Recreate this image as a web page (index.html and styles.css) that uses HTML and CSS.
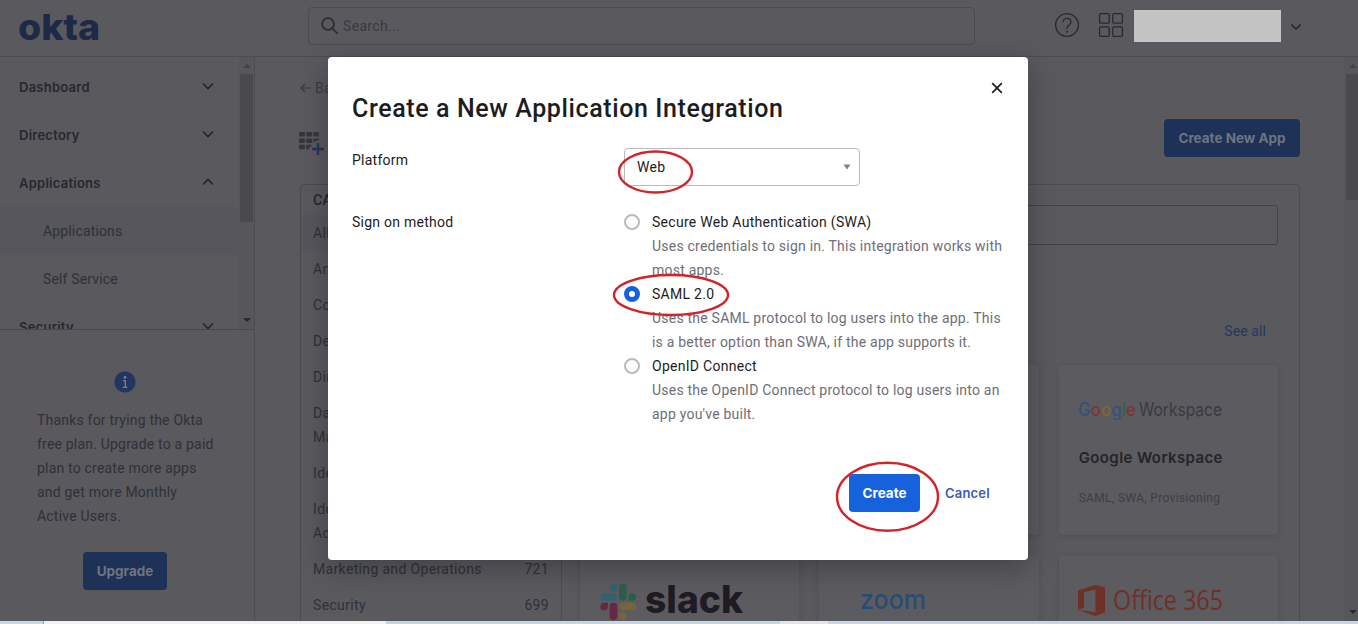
FILE: index.html
```html
<!DOCTYPE html>
<html lang="en">
<head>
<meta charset="utf-8">
<title>Create a New Application Integration</title>
<link rel="stylesheet" href="styles.css">
</head>
<body>
<div class="window">
  <div class="app">
    <header class="topbar">
      <div class="brand">
        <svg width="84" height="46" viewBox="0 0 84 46"><text class="okta" x="0" y="33" textLength="82" lengthAdjust="spacingAndGlyphs">okta</text></svg>
      </div>
      <div class="search">
        <svg width="20" height="20" viewBox="0 0 20 20" class="line-icon"><circle cx="8" cy="8" r="5.9"/><path d="M12.3 12.3 18 18"/></svg>
        <span>Search...</span>
      </div>
      <div class="tools">
        <svg width="26" height="26" viewBox="0 0 26 26" class="thin-icon"><circle cx="13" cy="13" r="11.4"/><path d="M9 10.2c0-2.3 1.7-3.8 4-3.800s4 1.500 4 3.600c0 2.900-4 3.100-4 6.200v.8"/><circle class="dot" cx="13" cy="19.800" r="1"/></svg>
        <svg width="26" height="26" viewBox="0 0 26 26" class="thin-icon"><rect x="1.600" y="1.600" width="9.600" height="9.600" rx="1.200"/><rect x="14.800" y="1.600" width="9.600" height="9.600" rx="1.200"/><rect x="1.600" y="14.800" width="9.600" height="9.600" rx="1.200"/><rect x="14.800" y="14.800" width="9.600" height="9.600" rx="1.200"/></svg>
        <div class="account"></div>
        <svg width="12" height="8" viewBox="0 0 12 8" class="chevron"><path d="M1.300 1.500 6 6l4.700-4.500"/></svg>
      </div>
    </header>
    <div class="body">
      <aside class="sidebar">
        <div class="nav-wrap">
          <nav class="nav">
            <div class="nav-item"><span>Dashboard</span><svg width="12" height="8" viewBox="0 0 12 8" class="chevron"><path d="M1 1.500 6 6.500l5-5"/></svg></div>
            <div class="nav-item"><span>Directory</span><svg width="12" height="8" viewBox="0 0 12 8" class="chevron"><path d="M1 1.500 6 6.500l5-5"/></svg></div>
            <div class="nav-item"><span>Applications</span><svg width="12" height="8" viewBox="0 0 12 8" class="chevron"><path d="M1 6.500 6 1.500l5 5"/></svg></div>
            <div class="nav-sub active">Applications</div>
            <div class="nav-sub">Self Service</div>
            <div class="nav-item"><span>Security</span><svg width="12" height="8" viewBox="0 0 12 8" class="chevron"><path d="M1 1.500 6 6.500l5-5"/></svg></div>
          </nav>
          <div class="scroll">
            <svg class="arrow up" width="8" height="4" viewBox="0 0 8 4"><path d="M0 4 4 0l4 4z"/></svg>
            <div class="thumb"></div>
            <svg class="arrow" width="8" height="4" viewBox="0 0 8 4"><path d="M0 0h8L4 4z"/></svg>
          </div>
        </div>
        <div class="promo">
          <svg width="22" height="22" viewBox="0 0 22 22"><circle cx="11" cy="11" r="10.600" fill="#22365f"/><circle cx="11" cy="6.400" r="1.300" fill="#7d8290"/><path d="M9 9.600h2.300v6.600M8.800 16.400h4.500" stroke="#7d8290" stroke-width="1.300" fill="none"/></svg>
          <p>Thanks for trying the Okta<br>free plan. Upgrade to a paid<br>plan to create more apps<br>and get more Monthly<br>Active Users.</p>
          <div class="btn-dim upgrade">Upgrade</div>
        </div>
      </aside>
      <main class="main">
        <div class="back"><svg width="12" height="10" viewBox="0 0 12 10"><path d="M11.500 5H1M5 1 1 5l4 4"/></svg><span>Back</span></div>
        <div class="page-head">
          <svg width="26" height="26" viewBox="0 0 26 26">
            <g fill="#36363c"><rect x="0" y="1" width="6" height="4.500" rx="1"/><rect x="7.200" y="1" width="6" height="4.500" rx="1"/><rect x="14.400" y="1" width="5.600" height="4.500" rx="1"/><rect x="0" y="7.500" width="6" height="4.500" rx="1"/><rect x="7.200" y="7.500" width="6" height="4.500" rx="1"/><path d="M14.400 8.500q0-1 1-1H20V9.500h-3.600V11h-2z"/><rect x="0" y="13.800" width="6" height="4.500" rx="1"/><path d="M7.200 13.800H12.500v2h-2v2.500H7.200z"/></g>
            <path d="M19 12v12M13 18h12" stroke="#22365f" stroke-width="2.400"/>
          </svg>
          <div class="btn-dim create-app">Create New App</div>
        </div>
        <div class="panel">
          <div class="cats">
            <div class="cat-head">CATEGORY</div>
            <div class="cat on"><span>All Integrations</span></div>
            <div class="cat"><span>Analytics</span></div>
            <div class="cat"><span>Collaboration</span></div>
            <div class="cat"><span>Developers</span></div>
            <div class="cat"><span>Directories</span></div>
            <div class="cat"><span>Data<br>Management</span></div>
            <div class="cat"><span>Identity</span></div>
            <div class="cat"><span>Identity<br>Administration</span></div>
            <div class="cat"><span>Marketing and Operations</span><span>721</span></div>
            <div class="cat"><span>Security</span><span>699</span></div>
          </div>
          <div class="results">
            <div class="filter"></div>
            <div class="see-all">See all</div>
            <div class="cards">
              <div class="card"></div>
              <div class="card"></div>
              <div class="card">
                <svg class="gw" width="150" height="28" viewBox="0 0 150 28"><text class="g-logo" x="-1" y="21" textLength="58" lengthAdjust="spacingAndGlyphs"><tspan fill="#34527f">G</tspan><tspan fill="#7b3738">o</tspan><tspan fill="#7c6630">o</tspan><tspan fill="#34527f">g</tspan><tspan fill="#32663f">l</tspan><tspan fill="#7b3738">e</tspan></text><text class="g-word" x="60" y="21" textLength="83" lengthAdjust="spacingAndGlyphs">Workspace</text></svg>
                <div class="card-title">Google Workspace</div>
                <div class="card-meta">SAML, SWA, Provisioning</div>
              </div>
              <div class="card short">
                <svg class="slack" width="150" height="38" viewBox="0 0 150 38">
                  <g stroke-width="7.600" stroke-linecap="round" fill="none">
                    <path d="M4.300 14H13.500" stroke="#35616f"/><path d="M22.800 4.300v9.700" stroke="#2c5d4b"/><path d="M22.800 23.500h9.700" stroke="#78643b"/><path d="M13.500 23.500v9.700" stroke="#652742"/>
                  </g>
                  <path d="M17.300 8H13.500A3.800 3.800 0 1 1 17.300 4.200z" fill="#35616f"/><path d="M28.500 17.800V14a3.800 3.800 0 1 1 3.800 3.800z" fill="#2c5d4b"/><path d="M19 29.400h3.800A3.800 3.800 0 1 1 19 33.200z" fill="#78643b"/><path d="M7.900 19.700v3.800a3.800 3.800 0 1 1-3.800-3.800z" fill="#652742"/>
                  <text class="slack-text" x="45" y="30" textLength="98" lengthAdjust="spacingAndGlyphs">slack</text>
                </svg>
              </div>
              <div class="card short">
                <svg class="zoom" width="80" height="30" viewBox="0 0 80 30"><text class="zoom-text" x="0" y="22" textLength="66" lengthAdjust="spacingAndGlyphs">zoom</text></svg>
              </div>
              <div class="card short">
                <svg class="office" width="160" height="36" viewBox="0 0 160 36"><path d="M0 6.500 17.500 1 27 3.500v25L17.500 32 0 26l17.500 2V5.500L6 8.200v15.600L0 26z" fill="#6f3027"/><text class="office-text" x="35" y="26" textLength="110" lengthAdjust="spacingAndGlyphs">Office 365</text></svg>
              </div>
            </div>
          </div>
        </div>
      </main>
      <div class="scroll page-scroll">
        <svg class="arrow up" width="8" height="4" viewBox="0 0 8 4"><path d="M0 4 4 0l4 4z"/></svg>
        <div class="thumb"></div>
        <svg class="arrow" width="8" height="4" viewBox="0 0 8 4"><path d="M0 0h8L4 4z"/></svg>
      </div>
    </div>
  </div>
  <div class="taskbar"><i class="a"></i><i class="b"></i><i class="c"></i><i class="d"></i><i class="e"></i></div>

  <section class="modal">
    <div class="modal-head">
      <h1>Create a New Application Integration</h1>
      <svg class="close" width="12" height="12" viewBox="0 0 12 12"><path d="M1.200 1.200l9.600 9.600M10.800 1.200 1.200 10.800"/></svg>
    </div>
    <div class="row platform">
      <div class="label">Platform</div>
      <div class="select"><span>Web</span><svg width="8" height="6" viewBox="0 0 8 6"><path d="M.5.5h7L4 5.500z" fill="#818188"/></svg></div>
    </div>
    <div class="row">
      <div class="label">Sign on method</div>
      <div class="options">
        <div class="option"><span class="radio"></span><div><div class="name">Secure Web Authentication (SWA)</div><div class="desc">Uses credentials to sign in. This integration works with<br>most apps.</div></div></div>
        <div class="option"><span class="radio checked"></span><div><div class="name">SAML 2.0</div><div class="desc">Uses the SAML protocol to log users into the app. This<br>is a better option than SWA, if the app supports it.</div></div></div>
        <div class="option"><span class="radio"></span><div><div class="name">OpenID Connect</div><div class="desc">Uses the OpenID Connect protocol to log users into an<br>app you've built.</div></div></div>
      </div>
    </div>
    <div class="actions"><div class="create">Create</div><div class="cancel">Cancel</div></div>
  </section>

  <svg class="marks" width="1358" height="624" viewBox="0 0 1358 624">
    <ellipse cx="655.500" cy="172" rx="36.500" ry="20.500"/>
    <ellipse cx="671" cy="295" rx="57" ry="20"/>
    <ellipse cx="887.500" cy="496.800" rx="50.500" ry="34"/>
  </svg>
</div>
</body>
</html>
```
FILE: styles.css
```css
* { box-sizing: border-box; }
body { margin: 0; background: #5a595e; font: 14px/24px Roboto, "Liberation Sans", sans-serif; letter-spacing: .34px; color: #303137; }
svg { display: block; flex: none; }
.window { position: relative; width: 1358px; height: 624px; overflow: hidden; display: flex; flex-direction: column; }
.app { flex: 1; min-height: 0; display: flex; flex-direction: column; overflow: hidden; }
.topbar { flex: none; height: 57px; border-bottom: 1px solid #4c4c51; display: flex; align-items: flex-start; }
.brand { width: 308px; padding: 7px 0 0 18px; }
.okta { font: 800 36px Inter, sans-serif; fill: #1d2946; letter-spacing: 0; }
.search { width: 667px; height: 38px; margin-top: 7px; border: 1px solid #4b4b50; border-radius: 4px; display: flex; align-items: center; gap: 3px; padding-left: 11px; color: #39393f; }
.line-icon { fill: none; stroke: #2b2b30; stroke-width: 1.7; }
.thin-icon { fill: none; stroke: #29292f; stroke-width: 1.3; }
.thin-icon .dot { fill: #29292f; stroke: none; }
.tools { display: flex; align-items: center; margin: 10px 0 0 79px; height: 32px; }
.thin-icon + .thin-icon { margin-left: 18px; }
.tools .thin-icon { margin-bottom: 2px; }
.account { width: 147px; height: 32px; background: #c4c4c4; margin-left: 10px; }
.tools .chevron { margin-left: 9px; margin-top: 2px; }
.chevron { fill: none; stroke: #232329; stroke-width: 1.6; }
.body { flex: 1; min-height: 0; display: flex; }
.sidebar { width: 255px; border-right: 1px solid #4d4d52; display: flex; flex-direction: column; }
.nav-wrap { height: 273px; flex: none; display: flex; border-bottom: 1px solid #47474c; overflow: hidden; }
.nav { width: 239px; padding-top: 6px; }
.nav-item { height: 48px; padding: 0 25px 0 19px; display: flex; align-items: center; justify-content: space-between; font: 600 13px/24px Inter, sans-serif; color: #27282e; letter-spacing: .25px; }
.nav-item .chevron { margin-bottom: 2px; }
.nav-sub { height: 48px; padding-left: 43px; line-height: 48px; letter-spacing: .15px; }
.nav-sub.active { background: #56565c; }
.scroll { width: 15px; background: #57565b; display: flex; flex-direction: column; align-items: center; padding: 7px 0 7px; }
.scroll .arrow { fill: #29292d; }
.scroll .arrow.up { fill: #424247; }
.thumb { width: 13px; height: 148px; margin: 6px 0 auto; background: #4a4a4e; }
.page-scroll { width: 14px; padding-bottom: 7px; }
.page-scroll .thumb { height: 126px; width: 12px; margin-left: 2px; }
.page-scroll .arrow { margin-left: 3px; }
.promo { flex: 1; padding: 41px 37px 0 33px; display: flex; flex-direction: column; align-items: center; }
.promo p { margin: 15px 0 24px 4px; align-self: flex-start; white-space: nowrap; letter-spacing: .2px; }
.btn-dim { height: 38px; line-height: 38px; border-radius: 4px; background: #1e3156; color: #6e7480; font-family: Inter, sans-serif; font-size: 13.5px; font-weight: 700; text-align: center; letter-spacing: 0; }
.upgrade { width: 84px; }
.main { width: 1089px; padding: 19px 44px 0 45px; display: flex; flex-direction: column; }
.back { height: 24px; display: flex; align-items: center; gap: 3px; color: #3c3c42; }
.back svg { fill: none; stroke: #39393e; stroke-width: 1.2; }
.page-head { flex: none; display: flex; justify-content: space-between; align-items: flex-start; padding-top: 19px; height: 84px; }
.page-head > svg { margin: 12px 0 0 -1px; }
.create-app { width: 136px; }
.panel { flex: 1; min-height: 500px; border: 1px solid #4b4b50; border-radius: 4px 4px 0 0; display: flex; }
.cats { width: 261px; border-right: 1px solid #4d4d52; }
.cat-head { height: 30px; padding: 3px 12px; color: #25262c; font-weight: 500; }
.cat { padding: 6px 12px; display: flex; justify-content: space-between; }
.cat.on { background: #56565c; }
.results { flex: 1; padding: 20px 21px 0 18px; }
.filter { height: 40px; border: 1px solid #414146; border-radius: 3px; }
.see-all { height: 24px; margin: 74px 12px 22px; text-align: right; color: #263861; letter-spacing: .1px; }
.cards { display: grid; grid-template-columns: repeat(3, 1fr); gap: 21px 20px; }
.card { height: 170px; border-radius: 4px; background: #5c5b60; box-shadow: 0 1px 5px #4e4e53; padding: 30px 20px; }
.card-title { margin-top: 23px; font: 600 15px/24px Inter, sans-serif; letter-spacing: .4px; color: #242429; white-space: nowrap; }
.card-meta { margin-top: 16px; font-size: 12px; color: #3e3e44; white-space: nowrap; }
.g-logo, .g-word { font: 18px Inter, sans-serif; letter-spacing: 0; }
.g-logo { font-weight: 500; }
.g-word { fill: #393a40; }
.slack { margin: -3px 0 0; }
.slack-text { font: 800 38px Inter, sans-serif; fill: #1e1b22; letter-spacing: 0; }
.zoom { margin: 1px 0 0 21px; }
.zoom-text { font: 500 27px Inter, sans-serif; fill: #294c73; letter-spacing: 0; }
.office { margin: -2px 0 0 -1px; }
.office-text { font: 27px "Open Sans", sans-serif; fill: #6f3027; letter-spacing: 0; }
.taskbar { flex: none; height: 3px; display: flex; }
.taskbar .a { width: 43px; background: #c5dae5; }
.taskbar .b { width: 343px; background: #f2f1f1; border-left: 1px solid #999; }
.taskbar .c { width: 394px; background: #c4d6e0; }
.taskbar .d { width: 48px; background: #e3e4ea; }
.taskbar .e { flex: 1; background: #cbd5e3; }

.modal { position: absolute; left: 328px; top: 57px; width: 700px; height: 503px; border-radius: 4px; background: #fff; box-shadow: 0 8px 28px rgba(0,0,0,.28); padding: 25px 24px; color: #1d1d21; }
.modal-head { display: flex; justify-content: space-between; }
h1 { margin: 11px 0 0; font-size: 25px; line-height: 32px; font-weight: 500; letter-spacing: .61px; white-space: nowrap; }
.close { margin-right: 1px; fill: none; stroke: #1d1d21; stroke-width: 1.7; }
.row { display: flex; }
.platform { margin-top: 23px; height: 62px; align-items: flex-start; }
.label { width: 272px; flex: none; letter-spacing: .25px; }
.select { width: 236px; height: 38px; border: 1px solid #b9b9be; border-radius: 4px; padding: 0 8px 0 12px; display: flex; align-items: center; justify-content: space-between; }
.options { flex: 1; }
.option { display: flex; gap: 12px; white-space: nowrap; }
.radio { width: 16px; height: 16px; margin-top: 4px; border: 2px solid #b9b9be; border-radius: 50%; flex: none; }
.radio.checked { border: 5px solid #1662dd; }
.name { letter-spacing: .28px; }
.desc { color: #6e6e78; letter-spacing: .22px; }
.actions { display: flex; justify-content: flex-end; align-items: center; gap: 25px; margin: 48px 13px 0 0; font: 700 13.5px/24px Inter, sans-serif; letter-spacing: 0; }
.create { width: 71px; height: 38px; line-height: 38px; border-radius: 4px; background: #1662dd; color: #fff; text-align: center; }
.cancel { width: 46px; white-space: nowrap; color: #3f59b5; font-weight: 600; font-size: 13px; letter-spacing: .2px; }
.marks { position: absolute; left: 0; top: 0; fill: none; stroke: #d2232a; stroke-width: 2.4; pointer-events: none; }
```
